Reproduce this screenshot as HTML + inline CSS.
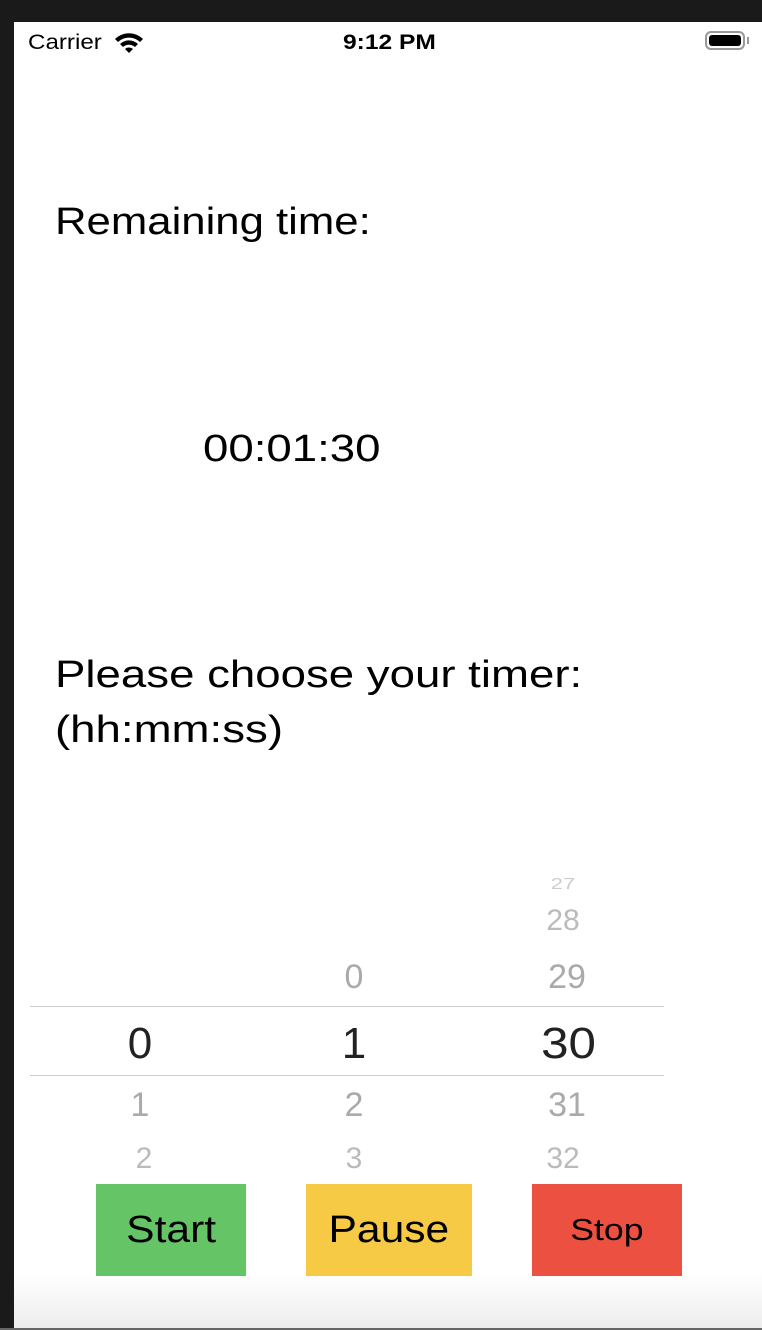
<!DOCTYPE html><html><head><style>
body{margin:0;width:762px;height:1330px;position:relative;overflow:hidden;background:#1a1a1a;font-family:"Liberation Sans",sans-serif;}
.s{position:absolute;left:14px;top:22px;right:0;bottom:2px;background:linear-gradient(#fff 0,#fff 1250px,#ededed 100%);}
.t{position:absolute;white-space:nowrap;color:#000;transform-origin:0 0}
.w{transform:scaleX(1.18)}
.p{position:absolute;width:120px;text-align:center;color:#aaa;font-size:34px;line-height:1}
.b{position:absolute;top:1184px;height:92px;display:flex;align-items:center;justify-content:center;color:#000}
.b span{display:inline-block;transform:scaleX(1.12)}
.ln{position:absolute;left:30px;width:634px;height:1px;background:#ccc}
</style></head><body>
<div class="s"></div>
<div class="t" style="left:28px;top:31px;font-size:21px;transform:scaleX(1.15)">Carrier</div>
<svg style="position:absolute;left:113px;top:31px" width="32" height="24" viewBox="0 0 32 24"><path d="M2 8 A20 20 0 0 1 30 8 L27 11 A16 16 0 0 0 5 11Z M7 13 A13 13 0 0 1 25 13 L22 16 A9 9 0 0 0 10 16Z M12 18 A6 6 0 0 1 20 18 L16 22Z" fill="#000"/></svg>
<div class="t" style="left:343px;top:31px;font-size:21px;font-weight:bold;transform:scaleX(1.17)">9:12 PM</div>
<div style="position:absolute;left:705px;top:31px;width:40px;height:19px;border:2px solid #999;border-radius:6px;box-sizing:border-box"><div style="position:absolute;left:2px;top:2px;right:2px;bottom:2px;background:#000;border-radius:3px"></div></div>
<div style="position:absolute;left:747px;top:37px;width:2px;height:7px;background:#999"></div>
<div class="t w" style="left:55px;top:201px;font-size:38px;transform:scaleX(1.15)">Remaining time:</div>
<div class="t w" style="left:203px;top:428px;font-size:38px;transform:scaleX(1.2)">00:01:30</div>
<div class="t w" style="left:55px;top:648px;font-size:38px;line-height:55px;transform:scaleX(1.2)">Please choose your timer:<br>(hh:mm:ss)</div>
<div class="ln" style="top:1006px"></div><div class="ln" style="top:1075px"></div>
<div class="p" style="left:503px;top:873px;font-size:22px;color:#ccc;transform:scaleY(.7)">27</div>
<div class="p" style="left:503px;top:906px;font-size:30px;color:#bbb">28</div>
<div class="p" style="left:507px;top:960px">29</div>
<div class="p" style="left:294px;top:960px">0</div>
<div class="p" style="left:80px;top:1022px;font-size:44px;color:#222">0</div>
<div class="p" style="left:294px;top:1022px;font-size:44px;color:#222">1</div>
<div class="p" style="left:508px;top:1022px;font-size:44px;color:#222"><span style="display:inline-block;transform:scaleX(1.12)">30</span></div>
<div class="p" style="left:80px;top:1088px">1</div>
<div class="p" style="left:294px;top:1088px">2</div>
<div class="p" style="left:507px;top:1088px">31</div>
<div class="p" style="left:84px;top:1144px;font-size:30px;color:#bbb">2</div>
<div class="p" style="left:294px;top:1144px;font-size:30px;color:#bbb">3</div>
<div class="p" style="left:503px;top:1144px;font-size:30px;color:#bbb">32</div>
<div class="b" style="left:96px;width:150px;background:#65c466;font-size:38px"><span>Start</span></div>
<div class="b" style="left:306px;width:166px;background:#f7ca45;font-size:38px"><span>Pause</span></div>
<div class="b" style="left:532px;width:150px;background:#ec5040;font-size:31px"><span style="transform:scaleX(1.15)">Stop</span></div>
<div style="position:absolute;left:0;right:0;bottom:0;height:2px;background:#666"></div>
</body></html>
